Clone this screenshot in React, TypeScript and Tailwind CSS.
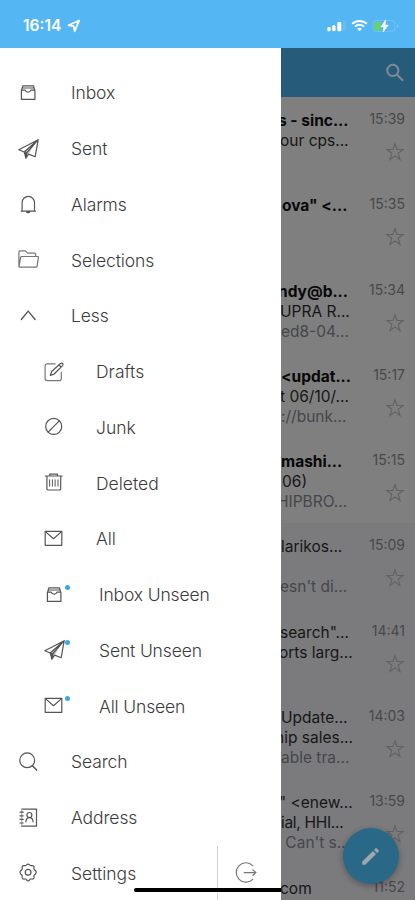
import React from 'react';

type IconName =
  | 'inbox' | 'sent' | 'bell' | 'folder' | 'less' | 'draft' | 'junk'
  | 'trash' | 'mail' | 'search' | 'address' | 'settings';

interface MenuItem {
  label: string;
  icon: IconName;
  nested?: boolean;
  unseen?: boolean;
}

interface MailLine {
  text: string;
  style: string;
}

interface Mail {
  time: string;
  read?: boolean;
  lines: MailLine[];
}

const menu: MenuItem[] = [
  { label: 'Inbox', icon: 'inbox' },
  { label: 'Sent', icon: 'sent' },
  { label: 'Alarms', icon: 'bell' },
  { label: 'Selections', icon: 'folder' },
  { label: 'Less', icon: 'less' },
  { label: 'Drafts', icon: 'draft', nested: true },
  { label: 'Junk', icon: 'junk', nested: true },
  { label: 'Deleted', icon: 'trash', nested: true },
  { label: 'All', icon: 'mail', nested: true },
  { label: 'Inbox Unseen', icon: 'inbox', nested: true, unseen: true },
  { label: 'Sent Unseen', icon: 'sent', nested: true, unseen: true },
  { label: 'All Unseen', icon: 'mail', nested: true, unseen: true },
  { label: 'Search', icon: 'search' },
  { label: 'Address', icon: 'address' },
];

const bold = 'font-bold text-[#080808]';
const dark = 'text-[#161616]';
const grey = 'text-[#45464a]';

const mails: Mail[] = [
  { time: '15:39', lines: [{ text: 's - sinc...', style: `${bold} -ml-[3px]` }, { text: 'our cps...', style: `${dark} -ml-[1px]` }] },
  { time: '15:35', lines: [{ text: 'ova" <...', style: `${bold} ml-[1px]` }] },
  { time: '15:34', lines: [{ text: 'ndy@b...', style: `${bold} -ml-[3px]` }, { text: 'UPRA R...', style: `${dark} -ml-[1px]` }, { text: 'ed8-04...', style: grey }] },
  { time: '15:17', lines: [{ text: '<updat...', style: bold }, { text: 't 06/10/...', style: `${dark} -ml-[1px]` }, { text: '://bunk...', style: grey }] },
  { time: '15:15', lines: [{ text: 'mashi...', style: bold }, { text: '06)', style: `${dark} ml-[1px]` }, { text: 'HIPBRO...', style: `${grey} -ml-[4px]` }] },
  { time: '15:09', read: true, lines: [{ text: 'larikos...', style: dark }, { text: '', style: dark }, { text: "esn't di...", style: `${grey} -ml-[1px]` }] },
  { time: '14:41', read: true, lines: [{ text: 'search"...', style: `${dark} -ml-[1px]` }, { text: 'orts larg...', style: `${dark} -ml-[2px]` }] },
  { time: '14:03', read: true, lines: [{ text: 'Update...', style: dark }, { text: 'hip sales...', style: `${dark} -ml-[6px]` }, { text: 'able tra...', style: grey }] },
  { time: '13:59', read: true, lines: [{ text: '" <enew...', style: `${dark} -ml-[2px]` }, { text: 'ial, HHI...', style: `${dark} tracking-[-0.3px]` }, { text: " Can't s...", style: grey }] },
  { time: '11:52', read: true, lines: [{ text: 'com', style: `${dark} -ml-[1px]` }] },
];

function Icon({ name }: { name: IconName }) {
  return (
    <svg
      viewBox="0 0 24 24"
      className="h-6 w-6 shrink-0"
      fill="none"
      stroke="#555"
      strokeWidth="1.2"
      strokeLinecap="round"
      strokeLinejoin="round"
    >
      {name === 'inbox' && (
        <path d="M5.4 10 6.8 4.9h10.7l1.4 5.1v8.4H5.4zM5.4 9.2h3.9c.3 1.3 1.4 2 2.8 2s2.5-.7 2.8-2h4M6.6 7h11" />
      )}
      {name === 'sent' && (
        <>
          <path d="M22.2 2.7 2.8 12.8l5.4 2.2L22.2 2.7l-3 17-6.6-2.6M22.2 2.7 10.2 16.3l-.4 4.8 2.8-4" />
          <path d="M8.2 15 20 4.7 12.6 16.9l-2.8 4.2z" fill="#4c4c4c" fillOpacity=".35" stroke="none" />
          <path d="m8.3 15 1.5 5.8 1.1-5.2" fill="#4c4c4c" />
        </>
      )}
      {name === 'bell' && (
        <>
          <path d="M6.1 19.1v-8.5a6.2 6.2 0 0 1 12.4 0v8.5M5.3 19.2h14.1" />
          <path d="M10.6 19.6c.2 1.5 3 1.5 3.2 0z" fill="#555" />
        </>
      )}
      {name === 'folder' && (
        <path d="M2.9 18.5V3.9c0-.7.3-1 1-1h5.5l2.2 2.3h7c.7 0 1 .3 1 1v2.3M3.1 18.5 4.6 9.4c.1-.6.4-.9 1-.9h16c.7 0 .9.3.8.9l-1.3 8.8c-.1.7-.4 1-1 1H3.9c-.6 0-.9-.2-.8-.7z" stroke="#777" />
      )}
      {name === 'less' && <path d="m5.3 15.5 6.9-8.4 6.9 8.4" strokeWidth="1.3" />}
      {name === 'draft' && (
        <>
          <path d="M13.2 3.8H5.2C3.8 3.8 3.1 4.5 3.1 5.8v12.8c0 1.3.7 2 2 2h12c1.5 0 2.2-.7 2.2-2.2v-6" stroke="#777" />
          <path d="m8.4 15.4 1.2-3.9 8.9-8c1.6-1.2 3.3.5 2.1 2.1l-8.7 8.6zM16.9 4.9l2.2 2.2" />
        </>
      )}
      {name === 'junk' && (
        <>
          <circle cx="11.7" cy="11.4" r="8" />
          <path d="M6.2 17.1 17.2 5.8" />
        </>
      )}
      {name === 'trash' && (
        <>
          <path d="M3.2 5h17M7.7 4.9V3.1h7.8v1.8M4.9 5.3v12.4c0 .9.4 1.3 1.3 1.3h11.2c.9 0 1.3-.4 1.3-1.3V5.3" />
          <path d="M7.6 8.8v6.4M10.4 8.8v6.4M13.1 8.8v6.4M16 8.8v6.4" strokeWidth="1" />
        </>
      )}
      {name === 'mail' && (
        <>
          <path d="M3.2 4.3h16.6v14H3.2z" />
          <path d="m3.4 4.6 8.1 7.1 8.1-7.1" />
        </>
      )}
      {name === 'search' && (
        <>
          <circle cx="11.2" cy="10.3" r="7.4" />
          <path d="m16.4 15.7 4.2 4.4" strokeWidth="1.5" />
        </>
      )}
      {name === 'address' && (
        <>
          <path d="M5.8 3.2H20.5v17H5.8" />
          <path d="M5.8 3.2v17" stroke="#aaa" />
          <path d="M4 6.2h3.2M4 9.8h3.2M4 13.4h3.2M4 17h3.2" />
          <circle cx="13.4" cy="9" r="2.5" />
          <path d="M9.9 15.8c0-2.7 1.3-4.2 3.5-4.2s3.6 1.5 3.6 4.2" />
        </>
      )}
      {name === 'settings' && (
        <>
          <path
            d="M9.5 4.6c1.1-.2 1.3-1.5 2.6-1.5s1.5 1.3 2.6 1.5c1 .3 1.9-.6 2.9.4s.1 1.900.4 2.900c.2 1.100 2.100 1.600 2.100 2.900v1c0 1.300-1.900 1.800-2.100 2.900-.3 1 .6 1.900-.4 2.900s-1.900.1-2.900.4c-1.100.2-1.300 2-2.600 2s-1.500-1.800-2.600-2c-1-.3-1.900.6-2.900-.4s-.1-1.900-.4-2.900c-.2-1.100-2.100-1.600-2.100-2.900v-1c0-1.300 1.900-1.800 2.100-2.900.3-1-.6-1.900.4-2.900s1.900-.1 2.900-.4z"
          />
          <circle cx="12.1" cy="11.3" r="2.900" />
        </>
      )}
    </svg>
  );
}

function StatusBar() {
  return (
    <div className="flex h-12 shrink-0 items-center bg-[#54b6f3] pt-[3px] pl-[23px] text-white">
      <span className="w-[44px] text-[15.5px] font-semibold">16:14</span>
      <svg viewBox="0 0 14 14" className="h-[14px] w-[14px]" fill="none" stroke="white" strokeWidth="1.8" strokeLinejoin="round">
        <path d="M12.2 1.5 1.6 6.3l5.2.9.8 5.1z" />
      </svg>
      <svg viewBox="0 0 20 12" className="ml-[246px] h-3 w-5" fill="white">
        <rect x="0.4" y="7" width="3.3" height="4.2" rx="1" />
        <rect x="5.2" y="5.3" width="3.3" height="5.9" rx="1" />
        <rect x="10.3" y="2" width="4" height="9.2" rx="1" />
        <rect x="15.6" y="0.4" width="3.1" height="10.8" rx="1" fillOpacity=".12" />
      </svg>
      <svg viewBox="0 0 17 13" className="ml-1 h-[13px] w-[17px]" fill="none" stroke="white" strokeWidth="2">
        <path d="M1.2 4.7C5.2 1 11.8 1 15.8 4.7M4 7.6c2.5-2.4 6.5-2.4 9 0" />
        <path d="m8.5 12.3-2.4-2.6c1.3-1.2 3.5-1.2 4.8 0z" fill="white" stroke="none" />
      </svg>
      <svg viewBox="0 0 27 14" className="ml-[4px] h-[14px] w-[27px]">
        <rect x="1" y="1.5" width="22" height="11" rx="3.5" fill="none" stroke="white" strokeOpacity=".16" />
        <path d="M4.3 2.700h4.400v9H4.300c-1.100 0-1.800-.7-1.800-1.800V4.500c0-1.100.7-1.800 1.800-1.800z" fill="#66d36b" />
        <path d="M25 5.300c1.300.6 1.300 2.800 0 3.400" fill="none" stroke="white" strokeOpacity=".25" />
        <path d="M13.700.8 8.900 7.900h2.900L11.200 13l5.200-6.900h-3.200z" fill="white" stroke="white" strokeWidth=".5" />
      </svg>
    </div>
  );
}

function Drawer() {
  return (
    <nav className="flex w-[281px] shrink-0 flex-col bg-white pt-[17px]">
      {menu.map((item) => (
        <div
          key={item.label}
          className={`flex h-[55.75px] shrink-0 items-center ${item.nested ? 'pl-[42px]' : 'pl-[16px]'}`}
        >
          <span className="relative flex w-6">
            <Icon name={item.icon} />
            {item.unseen && (
              <span className="absolute top-[2px] left-[23px] h-[5px] w-[5px] rounded-full bg-[#36a9e6]" />
            )}
          </span>
          <span
            className={`pt-[1px] text-[17.5px] font-light whitespace-nowrap text-[#3c3c3c] ${
              item.unseen ? 'ml-[33px] tracking-[-0.15px]' : item.nested ? 'ml-[30px]' : 'ml-[31px] tracking-[-0.1px]'
            }`}
          >
            {item.label}
          </span>
        </div>
      ))}
      <div className="flex h-[55.75px] shrink-0 pl-[16px]">
        <div className="flex w-[201px] items-center">
          <Icon name="settings" />
          <span className="ml-[31px] pt-[1px] text-[17.5px] font-light text-[#3c3c3c]">Settings</span>
        </div>
        <div className="flex flex-1 items-center border-l border-[#d4d4d4] pl-[16px]">
          <svg viewBox="0 0 24 24" className="h-6 w-6" fill="none" stroke="#777" strokeWidth="1.2" strokeLinecap="round">
            <path d="M18.800 4.600a9.700 9.700 0 1 0 0 13.700" />
            <path d="M10.200 11.600h11.600M18.900 8.900l2.900 2.700-2.900 2.700" />
          </svg>
        </div>
      </div>
    </nav>
  );
}

function MailRow({ mail }: { mail: Mail }) {
  return (
    <div className={`flex h-[85.3px] shrink-0 ${mail.read ? 'bg-[#7b7b7d]' : 'bg-[#7f7f7f]'}`}>
      <div className="min-w-0 flex-1 overflow-hidden pt-[14px]">
        {mail.lines.map((line, i) => (
          <p key={i} className={`h-5 text-[15.5px] leading-5 whitespace-pre ${line.style}`}>
            {line.text}
          </p>
        ))}
      </div>
      <div className="flex w-[50px] flex-col items-end pt-[12px] pr-[10px]">
        <span className="text-[14px] leading-5 text-[#48484a]">{mail.time}</span>
        <svg viewBox="0 0 20 20" className="mt-[13px] h-5 w-5" fill="none" stroke="#626264" strokeWidth="1.1">
          <path d="m10 1.800 2 5.700h6.100l-4.900 3.800 1.800 6.200-5-3.600-5 3.600 1.800-6.200-4.900-3.800h6.100z" />
        </svg>
      </div>
    </div>
  );
}

export default function App() {
  return (
    <div className="relative flex h-[900px] w-[415px] flex-col overflow-hidden bg-[#7f7f7f] font-['Inter','Liberation_Sans',sans-serif]">
      <StatusBar />
      <div className="flex min-h-0 flex-1">
        <Drawer />
        <main className="flex min-w-0 flex-1 flex-col overflow-hidden">
          <header className="flex h-[49px] shrink-0 items-center justify-end bg-[#265c7a] pr-[10px]">
            <svg viewBox="0 0 20 20" className="h-5 w-5" fill="none" stroke="#7f8b92" strokeWidth="2">
              <circle cx="7.8" cy="7.4" r="5.6" />
              <path d="m11.9 11.5 6.2 6.2" />
            </svg>
          </header>
          {mails.map((mail) => (
            <MailRow key={mail.time} mail={mail} />
          ))}
        </main>
      </div>
      <div className="absolute top-[888px] left-[134px] h-1 w-[147px] rounded-l-full bg-black" />
      <button className="absolute top-[828px] left-[343px] flex h-14 w-14 items-center justify-center rounded-full bg-[#2a6888] shadow-[0_2px_6px_rgba(0,0,0,0.3)]">
        <svg viewBox="0 0 20 20" className="h-5 w-5" fill="#9fa7ab">
          <path d="M1.200 15.600 12 4.900l3.100 3.100L4.300 18.700H1.200zM13 3.900l1.300-1.300c.5-.5 1.100-.5 1.600 0l1.500 1.500c.5.5.5 1.100 0 1.600l-1.300 1.300z" />
        </svg>
      </button>
    </div>
  );
}
